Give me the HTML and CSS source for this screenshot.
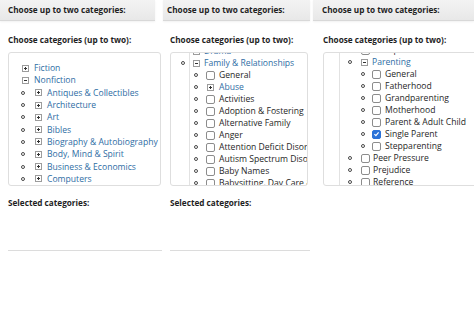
FILE: index.html
```html
<!DOCTYPE html>
<html lang="en">
<head>
<meta charset="utf-8">
<title>Categories</title>
<link rel="stylesheet" href="styles.css">
</head>
<body>
<main class="strip">

  <section class="panel p1">
    <div class="bar">Choose up to two categories:</div>
    <div class="content">
      <h2 class="label">Choose categories (up to two):</h2>
      <div class="tree-box">
        <div class="tree">
          <div class="row lv0"><span class="exp plus"></span><span class="link">Fiction</span></div>
          <div class="row lv0"><span class="exp minus"></span><span class="link">Nonfiction</span></div>
          <div class="row lv1"><span class="bullet"></span><span class="exp plus"></span><span class="link">Antiques &amp; Collectibles</span></div>
          <div class="row lv1"><span class="bullet"></span><span class="exp plus"></span><span class="link">Architecture</span></div>
          <div class="row lv1"><span class="bullet"></span><span class="exp plus"></span><span class="link">Art</span></div>
          <div class="row lv1"><span class="bullet"></span><span class="exp plus"></span><span class="link">Bibles</span></div>
          <div class="row lv1"><span class="bullet"></span><span class="exp plus"></span><span class="link">Biography &amp; Autobiography</span></div>
          <div class="row lv1"><span class="bullet"></span><span class="exp plus"></span><span class="link">Body, Mind &amp; Spirit</span></div>
          <div class="row lv1"><span class="bullet"></span><span class="exp plus"></span><span class="link">Business &amp; Economics</span></div>
          <div class="row lv1"><span class="bullet"></span><span class="exp plus"></span><span class="link">Computers</span></div>
        </div>
      </div>
      <h2 class="label sel-label">Selected categories:</h2>
      <div class="selected"></div>
    </div>
  </section>

  <section class="panel p2">
    <div class="bar">Choose up to two categories:</div>
    <div class="content">
      <h2 class="label">Choose categories (up to two):</h2>
      <div class="tree-box">
        <div class="rail"></div>
        <div class="tree">
          <div class="row pa"><span class="bullet"></span><span class="exp minus"></span><span class="link">Drama</span></div>
          <div class="row pa"><span class="bullet"></span><span class="exp minus"></span><span class="link">Family &amp; Relationships</span></div>
          <div class="row ch"><span class="bullet"></span><span class="cb"></span><span class="txt">General</span></div>
          <div class="row ch tall"><span class="bullet"></span><span class="exp plus"></span><span class="link">Abuse</span></div>
          <div class="row ch"><span class="bullet"></span><span class="cb"></span><span class="txt">Activities</span></div>
          <div class="row ch"><span class="bullet"></span><span class="cb"></span><span class="txt">Adoption &amp; Fostering</span></div>
          <div class="row ch"><span class="bullet"></span><span class="cb"></span><span class="txt">Alternative Family</span></div>
          <div class="row ch"><span class="bullet"></span><span class="cb"></span><span class="txt">Anger</span></div>
          <div class="row ch"><span class="bullet"></span><span class="cb"></span><span class="txt">Attention Deficit Disorders</span></div>
          <div class="row ch"><span class="bullet"></span><span class="cb"></span><span class="txt">Autism Spectrum Disorders</span></div>
          <div class="row ch"><span class="bullet"></span><span class="cb"></span><span class="txt">Baby Names</span></div>
          <div class="row ch"><span class="bullet"></span><span class="cb"></span><span class="txt">Babysitting, Day Care &amp; Child Care</span></div>
        </div>
      </div>
      <h2 class="label sel-label">Selected categories:</h2>
      <div class="selected"></div>
    </div>
  </section>

  <section class="panel p3">
    <div class="bar">Choose up to two categories:</div>
    <div class="content">
      <h2 class="label">Choose categories (up to two):</h2>
      <div class="tree-box">
        <div class="rail"></div>
        <div class="tree">
          <div class="row pa"><span class="bullet"></span><span class="cb"></span><span class="txt">Multiple Births</span></div>
          <div class="row pa"><span class="bullet"></span><span class="exp minus"></span><span class="link">Parenting</span></div>
          <div class="row ch"><span class="bullet"></span><span class="cb"></span><span class="txt">General</span></div>
          <div class="row ch"><span class="bullet"></span><span class="cb"></span><span class="txt">Fatherhood</span></div>
          <div class="row ch"><span class="bullet"></span><span class="cb"></span><span class="txt">Grandparenting</span></div>
          <div class="row ch"><span class="bullet"></span><span class="cb"></span><span class="txt">Motherhood</span></div>
          <div class="row ch"><span class="bullet"></span><span class="cb"></span><span class="txt">Parent &amp; Adult Child</span></div>
          <div class="row ch"><span class="bullet"></span><span class="cb checked"><svg viewBox="0 0 8 8" width="8" height="8"><path d="M1.6 4.2 3.3 5.8 6.4 2.2" fill="none" stroke="#fff" stroke-width="1.4"/></svg></span><span class="txt">Single Parent</span></div>
          <div class="row ch"><span class="bullet"></span><span class="cb"></span><span class="txt">Stepparenting</span></div>
          <div class="row pa"><span class="bullet"></span><span class="cb"></span><span class="txt">Peer Pressure</span></div>
          <div class="row pa"><span class="bullet"></span><span class="cb"></span><span class="txt">Prejudice</span></div>
          <div class="row pa"><span class="bullet"></span><span class="cb"></span><span class="txt">Reference</span></div>
        </div>
      </div>
    </div>
  </section>

</main>
</body>
</html>
```

FILE: styles.css
```css
* { box-sizing: border-box; }

html, body {
  margin: 0;
  padding: 0;
  background: #fff;
}

body {
  width: 474px;
  height: 327px;
  overflow: hidden;
  font-family: "Open Sans", "Liberation Sans", sans-serif;
  color: #222;
}

.strip {
  display: flex;
  align-items: flex-start;
  width: 474px;
}

.panel {
  flex: none;
  overflow: hidden;
  height: 327px;
}

.p1 { width: 162px; }
.p2 { width: 150px; }
.p3 { width: 162px; }

.bar {
  height: 21px;
  background: linear-gradient(#f3f3f3, #e8e8e8);
  border-bottom: 1px solid #d8d8d8;
  box-shadow: 0 1px 2px rgba(0,0,0,0.06);
  font-size: 8.2px;
  font-weight: 700;
  line-height: 20px;
  white-space: nowrap;
  color: #1e1e1e;
}

.p1 .bar { width: 155px; padding-left: 8px; }
.p2 .bar { width: 147px; margin-left: 1px; padding-left: 4px; }
.p3 .bar { width: 161px; margin-left: 1px; padding-left: 9px; }

.content { padding-top: 13px; }
.p1 .content { padding-left: 8px; }
.p2 .content { padding-left: 8px; }
.p3 .content { padding-left: 11px; }

.label {
  margin: 0;
  font-size: 8.2px;
  font-weight: 700;
  line-height: 12px;
  white-space: nowrap;
  color: #1e1e1e;
}

.tree-box {
  margin-top: 6px;
  height: 134px;
  border: 1px solid #dedede;
  border-radius: 3px;
  overflow: hidden;
  display: flex;
  font-size: 8.6px;
}

.p1 .tree-box { width: 153px; }
.p2 .tree-box { width: 138px; }
.p3 .tree-box { width: 170px; }

.rail {
  flex: none;
  border-right: 1px solid #e2e2e2;
}
.p2 .rail { width: 19px; }
.p3 .rail { width: 16px; }

.tree {
  flex: none;
  display: flex;
  flex-direction: column;
}

.p1 .tree { padding-top: 9px; }
.p2 .tree { margin-top: -8px; }
.p3 .tree { margin-top: -9px; }

.row {
  display: flex;
  align-items: center;
  white-space: nowrap;
  height: 12.2px;
  line-height: 12px;
}
.p1 .row { height: 12.8px; }
.row.tall { height: 13px; }

.link { color: #2e6da4; }
.txt { color: #262626; }

.bullet {
  flex: none;
  width: 4px;
  height: 4px;
  border: 1px solid #4a4a4a;
  border-radius: 50%;
}

.exp {
  flex: none;
  position: relative;
  width: 7px;
  height: 7px;
  border: 1px solid #9c9c9c;
  background: #fff;
}
.exp::before {
  content: "";
  position: absolute;
  left: 1px;
  right: 1px;
  top: 2px;
  height: 1px;
  background: #333;
}
.exp.plus::after {
  content: "";
  position: absolute;
  top: 1px;
  bottom: 1px;
  left: 2px;
  width: 1px;
  background: #333;
}

.cb {
  flex: none;
  width: 9px;
  height: 9px;
  border: 1px solid #8c8c8c;
  border-radius: 2px;
  background: #fff;
  display: flex;
  align-items: center;
  justify-content: center;
}
.cb.checked {
  background: #2a72d8;
  border-color: #2a72d8;
}
.cb svg { display: block; }

/* panel 1 indentation (box inner left = 9) */
.p1 .lv0 { padding-left: 13px; }
.p1 .lv0 .exp { margin-right: 5px; }
.p1 .lv1 { padding-left: 12px; }
.p1 .lv1 .bullet { margin-right: 10px; }
.p1 .lv1 .exp { margin-right: 5px; }

/* panel 2 (tree starts at x = 191) */
.p2 .pa { margin-left: -9px; }
.p2 .pa .bullet { margin-right: 8px; }
.p2 .pa .exp { margin-right: 4px; }
.p2 .ch { padding-left: 4px; }
.p2 .ch .bullet { margin-right: 8px; }
.p2 .ch .cb { margin-right: 4px; }
.p2 .ch .exp { margin-left: 1px; margin-right: 5px; }

/* panel 3 (tree starts at x = 341) */
.p3 .pa { padding-left: 8px; }
.p3 .pa .bullet { margin-right: 9px; }
.p3 .pa .exp { margin-right: 4px; }
.p3 .pa .cb { margin-right: 3px; }
.p3 .ch { padding-left: 21px; }
.p3 .ch .bullet { margin-right: 7px; }
.p3 .ch .cb { margin-right: 4px; }

.sel-label { margin-top: 11px; }

.selected {
  height: 42px;
  border-bottom: 1px solid #dcdcdc;
}
.p1 .selected { width: 154px; }
.p2 .selected { width: 140px; }
```
